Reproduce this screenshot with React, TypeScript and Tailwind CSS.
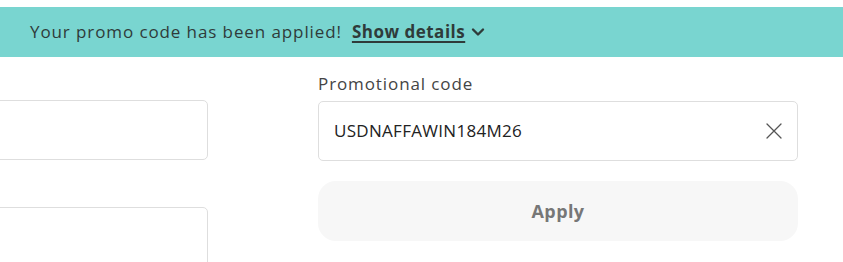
export default function App() {
  return (
    <div
      className="h-[262px] w-[843px] overflow-hidden bg-white pt-[7px] text-[#333]"
      style={{ fontFamily: "'Open Sans', 'Liberation Sans', sans-serif" }}
    >
      <div className="flex h-[50px] items-center bg-[#79d5d0] pl-[30px] text-[17px]">
        <span className="tracking-[0.9px] text-[#2f3b3a]">Your promo code has been applied!</span>
        <button className="ml-[10px] flex items-center gap-[6px] font-bold text-[#2f3b3a]">
          <span className="tracking-[0.5px] underline decoration-[1.5px] underline-offset-[3px]">Show details</span>
          <svg width="14" height="14" viewBox="0 0 14 14" fill="none">
            <path d="M2 4.5 7 9.5 12 4.5" stroke="#2f3b3a" strokeWidth="2.4" strokeLinecap="round" strokeLinejoin="round" />
          </svg>
        </button>
      </div>

      <div className="flex">
        <div className="ml-[-193px] w-[401px] shrink-0 pt-[43px]">
          <div className="h-[60px] rounded-[5px] border border-[#dedede]" />
          <div className="mt-[47px] h-[60px] rounded-[5px] border border-[#dedede]" />
        </div>

        <div className="ml-[110px] w-[480px] shrink-0 pt-[16px]">
          <label className="block text-[17px] leading-[22px] tracking-[0.9px] text-[#444]">Promotional code</label>
          <div className="mt-[6px] flex h-[60px] items-center justify-between rounded-[5px] border border-[#dedede] pl-[15px] pr-[15px]">
            <span className="text-[17px] tracking-[0.3px] text-[#222]">USDNAFFAWIN184M26</span>
            <svg width="16" height="16" viewBox="0 0 16 16" fill="none">
              <path d="M1 1 15 15M15 1 1 15" stroke="#555" strokeWidth="1.3" strokeLinecap="round" />
            </svg>
          </div>
          <button className="mt-[20px] flex h-[60px] w-full items-center justify-center rounded-[18px] bg-[#f7f7f7] text-[18px] font-bold tracking-[0.4px] text-[#777]">
            Apply
          </button>
        </div>
      </div>
    </div>
  );
}
